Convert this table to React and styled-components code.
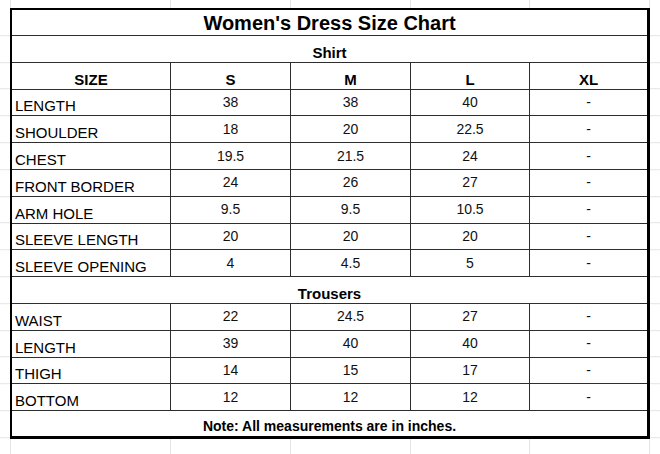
import React from 'react'
import styled, { createGlobalStyle } from 'styled-components'

const GlobalStyle = createGlobalStyle`
  html, body {
    margin: 0;
    padding: 0;
    background: #fff;
  }
  body {
    font-family: "Liberation Sans", Arial, sans-serif;
    color: #000;
  }
`

const faint = '#e4e4e4'
const line = '#2e2e2e'

// spreadsheet gridlines peeking out around the chart
const Sheet = styled.div`
  width: 660px;
  height: 454px;
  box-sizing: border-box;
  padding: 8px 0 0 10px;
  background-color: #fff;
  background-image:
    linear-gradient(${faint}, ${faint}),
    linear-gradient(${faint}, ${faint}),
    linear-gradient(${faint}, ${faint}),
    linear-gradient(${faint}, ${faint}),
    linear-gradient(${faint}, ${faint}),
    linear-gradient(${faint}, ${faint}),
    repeating-linear-gradient(to bottom, transparent 0 25.8px, ${faint} 25.8px 26.8px);
  background-size: 1px 100%, 1px 100%, 1px 100%, 1px 100%, 1px 100%, 1px 100%, 100% 100%;
  background-position: 10px 0, 170px 0, 290px 0, 410px 0, 529px 0, 649px 0, 0 9.2px;
  background-repeat: no-repeat, no-repeat, no-repeat, no-repeat, no-repeat, no-repeat, repeat-y;
`

const Chart = styled.div`
  display: grid;
  grid-template-columns: 159px 120px 120px 119px 117px;
  grid-template-rows: 26px repeat(14, 26.8px) 1fr;
  height: 426px;
  width: 635px;
  border-style: solid;
  border-color: #000;
  border-width: 2px 3px 3px 2px;
  background: #fff;
`

const Cell = styled.div`
  display: flex;
  align-items: flex-end;
  justify-content: ${p => (p.$left ? 'flex-start' : 'center')};
  padding: 0 3px 1px;
  border-right: ${p => (p.$end ? 'none' : `1px solid ${line}`)};
  border-bottom: 1px solid ${line};
  font-size: 15px;
  line-height: 17px;
  font-weight: ${p => (p.$bold ? 700 : 400)};
  white-space: nowrap;
  overflow: hidden;
`

const Banner = styled(Cell)`
  grid-column: 1 / -1;
  border-right: none;
  border-bottom: ${p => (p.$last ? 'none' : `1px solid ${line}`)};
  font-weight: 700;
  font-size: ${p => (p.$big ? '20px' : p.$small ? '14px' : '15px')};
  line-height: ${p => (p.$big ? '20px' : '17px')};
  padding-bottom: ${p => (p.$big ? '2px' : '1px')};
`

const Value = styled(Cell)`
  align-items: center;
  padding-bottom: 0;
  font-size: 14px;
  color: #111;
`

const shirt = [
  ['LENGTH', '38', '38', '40', '-'],
  ['SHOULDER', '18', '20', '22.5', '-'],
  ['CHEST', '19.5', '21.5', '24', '-'],
  ['FRONT BORDER', '24', '26', '27', '-'],
  ['ARM HOLE', '9.5', '9.5', '10.5', '-'],
  ['SLEEVE LENGTH', '20', '20', '20', '-'],
  ['SLEEVE OPENING', '4', '4.5', '5', '-'],
]

const trousers = [
  ['WAIST', '22', '24.5', '27', '-'],
  ['LENGTH', '39', '40', '40', '-'],
  ['THIGH', '14', '15', '17', '-'],
  ['BOTTOM', '12', '12', '12', '-'],
]

const sizes = ['S', 'M', 'L', 'XL']

const Row = ({ cells }) => (
  <>
    <Cell $left>{cells[0]}</Cell>
    {cells.slice(1).map((v, i) => (
      <Value key={i} $end={i === 3}>{v}</Value>
    ))}
  </>
)

const App = () => (
  <>
    <GlobalStyle />
    <Sheet>
      <Chart>
        <Banner $big>Women&apos;s Dress Size Chart</Banner>
        <Banner>Shirt</Banner>
        <Cell $bold>SIZE</Cell>
        {sizes.map((s, i) => (
          <Cell key={s} $bold $end={i === 3}>{s}</Cell>
        ))}
        {shirt.map(r => <Row key={'s' + r[0]} cells={r} />)}
        <Banner>Trousers</Banner>
        {trousers.map(r => <Row key={'t' + r[0]} cells={r} />)}
        <Banner $last $small>Note: All measurements are in inches.</Banner>
      </Chart>
    </Sheet>
  </>
)

export default App
